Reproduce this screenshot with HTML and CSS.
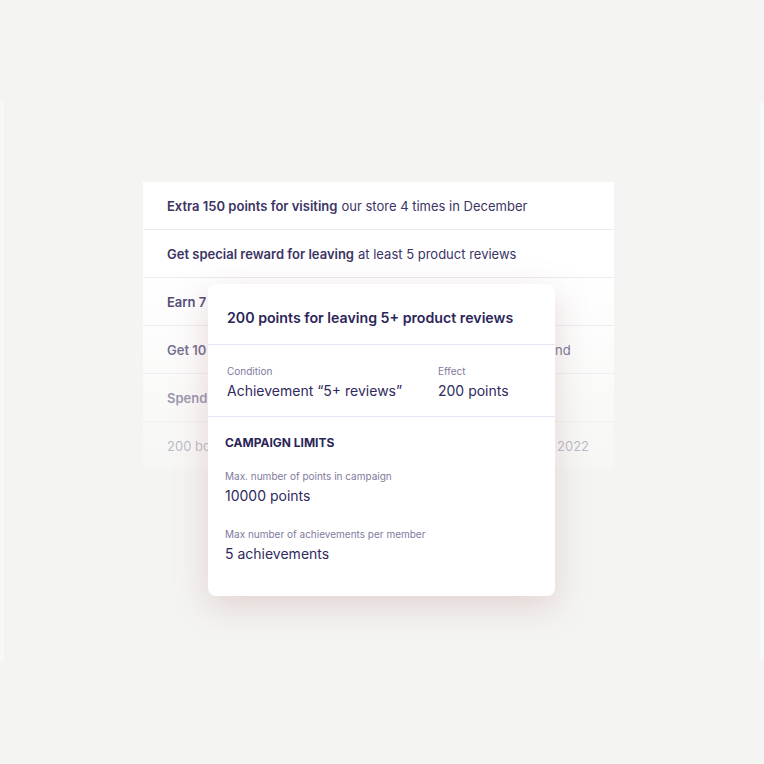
FILE: index.html
```html
<!DOCTYPE html>
<html>
<head>
<meta charset="utf-8">
<link rel="stylesheet" href="styles.css">
</head>
<body>
<div class="frame">
  <div class="stage">
    <div class="table">
      <div class="row"><b>Extra 150 points for visiting</b> our store 4 times in December</div>
      <div class="row"><b>Get special reward for leaving</b> at least 5 product reviews</div>
      <div class="row"><b>Earn 7 points for every</b> purchase</div>
      <div class="row"><b>Get 10 points for every $1 spent</b> in our stores during the weekend</div>
      <div class="row"><b>Spend $100</b> and get a gift</div>
      <div class="row">200 bonus points for new members who joined before October 2022</div>
      <div class="fade"></div>
    </div>
    <div class="popup">
      <div class="pop-head">200 points for leaving 5+ product reviews</div>
      <div class="pop-cols">
        <div class="col col-cond">
          <div class="label">Condition</div>
          <div class="value">Achievement “5+ reviews”</div>
        </div>
        <div class="col">
          <div class="label">Effect</div>
          <div class="value">200 points</div>
        </div>
      </div>
      <div class="pop-limits">
        <div class="limits-title">CAMPAIGN LIMITS</div>
        <div class="limit">
          <div class="label">Max. number of points in campaign</div>
          <div class="value">10000 points</div>
        </div>
        <div class="limit">
          <div class="label">Max number of achievements per member</div>
          <div class="value">5 achievements</div>
        </div>
      </div>
    </div>
  </div>
</div>
</body>
</html>
```

FILE: styles.css
```css
html, body {
  margin: 0;
  padding: 0;
  background: #f4f4f2;
  font-family: Inter, "Noto Sans", sans-serif;
  color: #3a3462;
}
.frame {
  margin-top: 102px;
  height: 560px;
  background: #f7f8f8;
  padding: 0 4px;
}
.stage {
  position: relative;
  height: 100%;
  background: #f4f4f2;
  padding: 80px 0 0 139px;
  box-sizing: border-box;
}
.table {
  position: relative;
  width: 471px;
  background: #ffffff;
}
.row {
  height: 47px;
  border-bottom: 1px solid #eceaf0;
  display: flex;
  align-items: center;
  padding-left: 24px;
  font-size: 13px;
  color: #3b3464;
  white-space: nowrap;
  overflow: hidden;
}
.row:nth-child(6) {
  border-bottom: none;
}
.row b {
  font-weight: 600;
  margin-right: 4px;
}
.fade {
  position: absolute;
  left: 0;
  top: 0;
  right: 0;
  bottom: 0;
  background: linear-gradient(to bottom, rgba(244,244,242,0) 0px, rgba(244,244,242,0) 88px, rgba(244,244,242,0.78) 100%);
}
.popup {
  position: absolute;
  left: 204px;
  top: 182px;
  width: 347px;
  height: 312px;
  background: #ffffff;
  border-radius: 8px;
  box-shadow: 0 10px 34px rgba(175, 125, 125, 0.28);
  box-sizing: border-box;
}
.pop-head {
  height: 61px;
  border-bottom: 1px solid #e7e5f1;
  display: flex;
  align-items: center;
  padding: 7px 0 0 19px;
  box-sizing: border-box;
  font-size: 14.2px;
  font-weight: 600;
  color: #2c2658;
}
.pop-cols {
  height: 72px;
  border-bottom: 1px solid #e7e5f1;
  display: flex;
  padding: 19px 0 0 19px;
  box-sizing: border-box;
}
.col-cond {
  width: 211px;
}
.label {
  font-size: 10px;
  color: #7f7a9e;
  line-height: 14px;
}
.value {
  font-size: 14px;
  color: #2f2a5c;
  line-height: 20px;
  margin-top: 3px;
}
.pop-limits {
  padding: 18px 0 0 17px;
}
.limits-title {
  font-size: 12px;
  font-weight: 700;
  color: #2c2658;
  line-height: 16px;
  margin-bottom: 18px;
}
.limit {
  margin-bottom: 21px;
}
```
